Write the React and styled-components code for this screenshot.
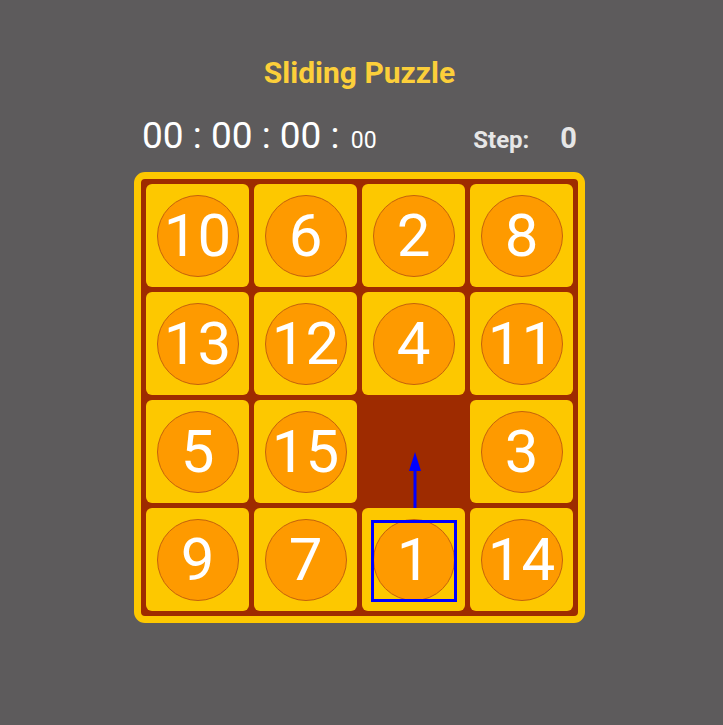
import React from 'react';
import styled, { createGlobalStyle } from 'styled-components';

const GlobalStyle = createGlobalStyle`
  html, body {
    margin: 0;
    padding: 0;
    background: #5d5b5c;
    font-family: Roboto, "Liberation Sans", sans-serif;
  }
`

const Page = styled.div`
  display: flex;
  flex-direction: column;
  align-items: center;
  padding-top: 56px;
  padding-right: 4px;
  min-height: 725px;
  box-sizing: border-box;
`

const Title = styled.h1`
  margin: 0;
  font-size: 30px;
  line-height: 34px;
  font-weight: 700;
  color: #fccf3a;
`

const InfoRow = styled.div`
  display: flex;
  align-items: baseline;
  justify-content: space-between;
  width: 451px;
  box-sizing: border-box;
  padding: 0 8px 0 8px;
  margin-top: 25px;
  height: 42px;
`

const Timer = styled.div`
  color: #ffffff;
  font-size: 37px;
  line-height: 42px;
  small {
    font-size: 23px;
    margin-left: 2px;
  }
`

const Steps = styled.div`
  display: flex;
  align-items: baseline;
  gap: 31px;
  color: #e6e6e6;
  font-weight: 700;
  .label { font-size: 24px; }
  .count { font-size: 29px; }
`

const Board = styled.div`
  margin-top: 15px;
  width: 451px;
  box-sizing: border-box;
  border: 7px solid #fdc800;
  border-radius: 11px;
  background: #9e2b00;
  padding: 5px;
  display: grid;
  grid-template-columns: repeat(4, 1fr);
  grid-auto-rows: 103px;
  gap: 5px;
`

const Tile = styled.div`
  position: relative;
  background: ${p => (p.empty ? 'transparent' : '#fdc800')};
  border-radius: 6px;
  display: flex;
  align-items: center;
  justify-content: center;
`

const Disc = styled.div`
  width: 82px;
  height: 82px;
  box-sizing: border-box;
  border-radius: 50%;
  background: #fe9a00;
  border: 1px solid #c4620c;
  display: flex;
  align-items: center;
  justify-content: center;
  color: #ffffff;
  font-size: 60px;
  line-height: 1;
`

const HintBox = styled.div`
  position: absolute;
  left: 9px;
  top: 12px;
  width: 86px;
  height: 82px;
  box-sizing: border-box;
  border: 3px solid #0000ff;
  pointer-events: none;
`

const Arrow = styled.svg`
  position: absolute;
  left: 47px;
  top: -56px;
  overflow: visible;
`

const tiles = [10, 6, 2, 8, 13, 12, 4, 11, 5, 15, 0, 3, 9, 7, 1, 14]

export default function App() {
  return (
    <Page>
      <GlobalStyle />
      <Title>Sliding Puzzle</Title>
      <InfoRow>
        <Timer>00 : 00 : 00 : <small>00</small></Timer>
        <Steps>
          <span className="label">Step:</span>
          <span className="count">0</span>
        </Steps>
      </InfoRow>
      <Board>
        {tiles.map(n => (
          <Tile key={n} empty={n === 0}>
            {n !== 0 && <Disc>{n}</Disc>}
            {n === 1 && (
              <>
                <HintBox />
                <Arrow width="12" height="56" viewBox="0 0 12 56">
                  <line x1="6" y1="56" x2="6" y2="16" stroke="#0000ff" strokeWidth="3" />
                  <polygon points="6,0 12,19 0,19" fill="#0000ff" />
                </Arrow>
              </>
            )}
          </Tile>
        ))}
      </Board>
    </Page>
  )
}
